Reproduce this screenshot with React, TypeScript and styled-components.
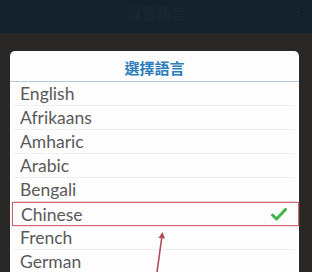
import React from "react";
import styled, { createGlobalStyle } from "styled-components";

const Global = createGlobalStyle`
  html, body { margin: 0; padding: 0; background: #2a2826; overflow: hidden; }
  body { width: 312px; height: 272px; font-family: Lato, "Open Sans", sans-serif; }
`;

const Screen = styled.div`
  position: relative;
  width: 312px;
  height: 272px;
  display: flex;
  flex-direction: column;
  background: #2a2826;
  overflow: hidden;
`;

const TopBar = styled.div`
  height: 33px;
  flex: none;
  background: #14212d;
  display: flex;
  align-items: center;
  justify-content: center;
  position: relative;
`;

const TopTitle = styled.div`
  font-family: "Noto Sans CJK TC", sans-serif;
  font-weight: 700;
  font-size: 15px;
  color: #1a2631;
  margin-top: -9px;
`;

const Dots = styled.div`
  position: absolute;
  right: 13px;
  top: 7px;
  display: flex;
  flex-direction: column;
  gap: 2px;
  span { width: 2px; height: 2px; background: #1f2c37; border-radius: 50%; }
`;

const Backdrop = styled.div`
  flex: 1;
  padding: 18px 13px 0 10px;
  display: flex;
`;

const Dialog = styled.div`
  flex: 1;
  background: #fdfdfd;
  border-radius: 5px 5px 0 0;
  display: flex;
  flex-direction: column;
`;

const DialogTitle = styled.div`
  height: 28px;
  display: flex;
  align-items: center;
  justify-content: center;
  font-family: "Noto Sans CJK TC", sans-serif;
  font-weight: 700;
  font-size: 15px;
  color: #2b7cb9;
  border-bottom: 1.5px solid #b8cad8;
  padding-top: 2px;
`;

const List = styled.div`
  display: flex;
  flex-direction: column;
`;

const Row = styled.div<{ $selected?: boolean }>`
  height: 24px;
  box-sizing: border-box;
  margin: 0 ${(p) => (p.$selected ? "0 0 2px" : "4px")};
  padding-left: ${(p) => (p.$selected ? "8px" : "6px")};
  padding-right: 6px;
  display: flex;
  align-items: center;
  justify-content: space-between;
  font-size: 17.5px;
  color: #5a5a5a;
  border-bottom: 1px solid #efefef;
  ${(p) =>
    p.$selected
      ? `border: 1.5px solid #cf6a74; box-shadow: 0 0 0 0.5px rgba(220,120,130,0.4);`
      : ""}
`;

const Check = styled.svg`
  width: 16px;
  height: 13px;
  margin-right: 5px;
`;

const Arrow = styled.svg`
  position: absolute;
  left: 150px;
  top: 228px;
  width: 20px;
  height: 44px;
`;

const languages = ["English", "Afrikaans", "Amharic", "Arabic", "Bengali", "Chinese", "French", "German"];

export default function App() {
  return (
    <>
      <Global />
      <Screen>
        <TopBar>
          <TopTitle>設置語言</TopTitle>
          <Dots>
            <span />
            <span />
            <span />
          </Dots>
        </TopBar>
        <Backdrop>
          <Dialog>
            <DialogTitle>選擇語言</DialogTitle>
            <List>
              {languages.map((l) => (
                <Row key={l} $selected={l === "Chinese"}>
                  <span>{l}</span>
                  {l === "Chinese" && (
                    <Check viewBox="0 0 16 13">
                      <path d="M1.5 7 L5.5 11 L14.5 1.5" fill="none" stroke="#43b347" strokeWidth="3" strokeLinecap="round" strokeLinejoin="round" />
                    </Check>
                  )}
                </Row>
              ))}
            </List>
          </Dialog>
        </Backdrop>
        <Arrow viewBox="0 0 20 44">
          <path d="M7 44 L12 8" stroke="#b5485a" strokeWidth="1.6" fill="none" />
          <path d="M12.5 4 L8.5 10 L15 10.5 Z" fill="#b5485a" />
        </Arrow>
      </Screen>
    </>
  );
}
